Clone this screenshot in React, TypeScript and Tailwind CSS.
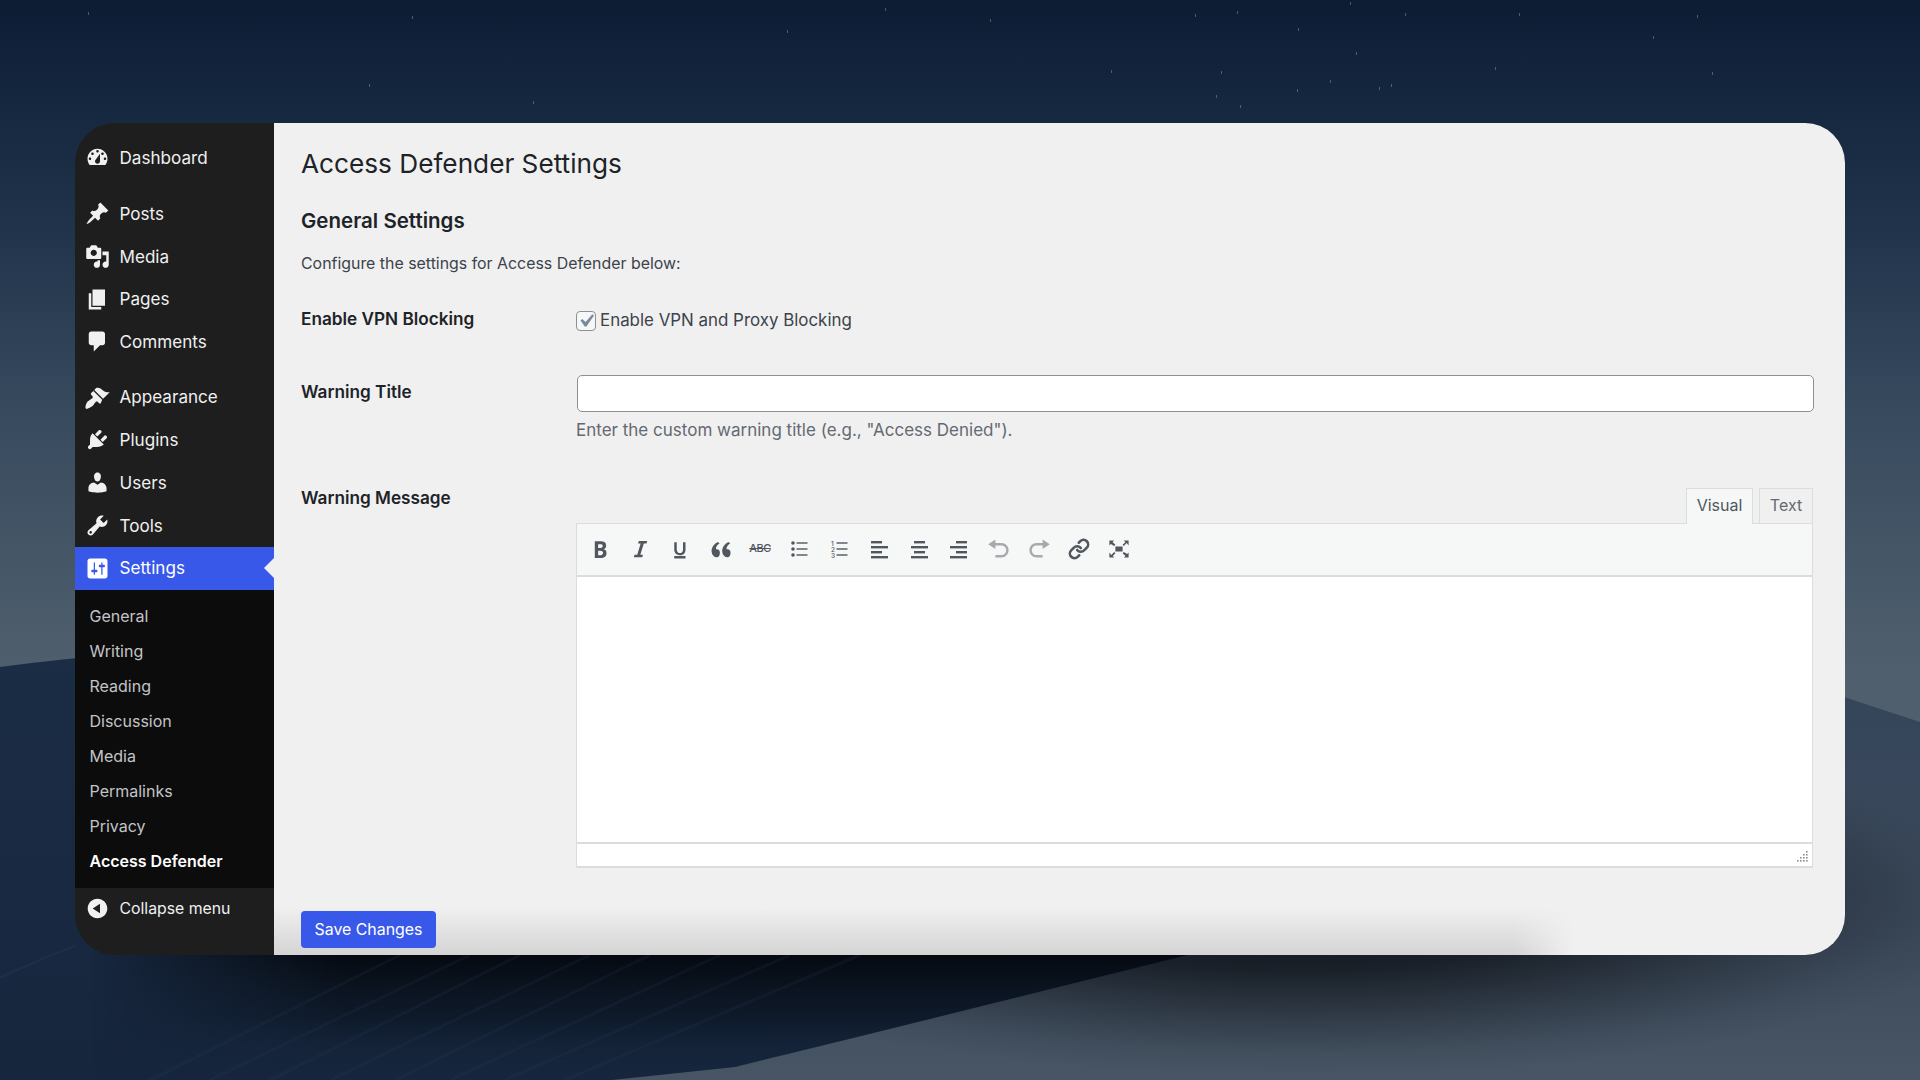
import React from "react";
import { Link } from "lucide-react";

const P = ({ d, size = 24, className = "", vb = "0 0 20 20" }: { d: string; size?: number; className?: string; vb?: string }) => (
  <svg width={size} height={size} viewBox={vb} className={className} fill="currentColor">
    <path d={d} fillRule="evenodd" />
  </svg>
);

const icons: Record<string, string> = {
  dashboard:
    "M3.76 16h12.48c1.1-1.37 1.76-3.11 1.76-5 0-4.42-3.58-8-8-8s-8 3.58-8 8c0 1.89.66 3.63 1.76 5zM10 4c.55 0 1 .45 1 1s-.45 1-1 1-1-.45-1-1 .45-1 1-1zM6 6c.55 0 1 .45 1 1s-.45 1-1 1-1-.45-1-1 .45-1 1-1zm8 0c.55 0 1 .45 1 1s-.45 1-1 1-1-.45-1-1 .45-1 1-1zm-5.37 5.55L12 7v6c0 1.1-.9 2-2 2s-2-.9-2-2c0-.57.24-1.08.63-1.45zM4 10c.55 0 1 .45 1 1s-.45 1-1 1-1-.45-1-1 .45-1 1-1zm12 0c.55 0 1 .45 1 1s-.45 1-1 1-1-.45-1-1 .45-1 1-1z",
  posts:
    "M10.44 3.02l1.82-1.82 6.36 6.35-1.83 1.82c-1.05-.68-2.48-.57-3.41.36l-.75.75c-.92.93-1.04 2.35-.35 3.41l-1.83 1.82-2.41-2.41-2.8 2.79c-.42.42-3.38 2.71-3.8 2.29s1.86-3.39 2.28-3.81l2.79-2.79L4.1 9.36l1.83-1.82c1.05.69 2.48.57 3.4-.36l.75-.75c.93-.92 1.05-2.35.36-3.41z",
  media:
    "M13 11V4c0-.55-.45-1-1-1h-1.67L9 1H5L3.67 3H2c-.55 0-1 .45-1 1v7c0 .55.45 1 1 1h10c.55 0 1-.45 1-1zM7 4.5c1.38 0 2.5 1.12 2.5 2.5S8.38 9.5 7 9.5 4.5 8.38 4.5 7 5.62 4.5 7 4.5zM14 6h5v10.5c0 1.38-1.12 2.5-2.5 2.5S14 17.88 14 16.5s1.12-2.5 2.5-2.5c.17 0 .34.02.5.05V9h-3V6zm-4 8.05V13h2v3.5c0 1.38-1.12 2.5-2.5 2.5S7 17.88 7 16.5 8.12 14 9.5 14c.17 0 .34.02.5.05z",
  pages: "M6 15V2h10v13H6zm-1 1h8v2H3V5h2v11z",
  comments: "M5 2h9c1.1 0 2 .9 2 2v7c0 1.1-.9 2-2 2h-2l-5 5v-5H5c-1.1 0-2-.9-2-2V4c0-1.1.9-2 2-2z",
  appearance:
    "M14.48 11.06L7.41 3.99l1.5-1.5c.5-.56 2.3-.47 3.51.32 1.21.8 1.43 1.28 2.91 2.1 1.18.64 2.45 1.26 4.45.85zm-.71.71L6.7 4.7 4.93 6.47c-.39.39-.39 1.02 0 1.41l1.06 1.06c.39.39.39 1.03 0 1.42-.6.6-1.43 1.11-2.21 1.69-.35.26-.7.53-1.01.84C1.43 13.23.39 16.8.39 17.92c0 .54.18.85.53 1.1.66.45 3.95-.99 5.28-2.33.32-.31.58-.66.84-1.01.58-.78 1.09-1.61 1.69-2.21.39-.39 1.03-.39 1.42 0l1.06 1.06c.39.39 1.02.39 1.41 0z",
  plugins:
    "M13.11 4.36L9.87 7.6 8 5.73l3.24-3.24c.35-.34 1.05-.2 1.56.32.52.51.66 1.21.31 1.55zm-8 1.77l.91-1.12 9.01 9.01-1.19.84c-.71.71-2.63 1.16-3.82 1.16H6.14L4.9 17.26c-.59.59-1.54.59-2.12 0-.59-.58-.59-1.53 0-2.12l1.24-1.24v-3.88c0-1.13.4-3.19 1.09-3.89zm7.26 3.97l3.24-3.24c.34-.35 1.04-.21 1.55.31.52.51.66 1.21.31 1.55l-3.24 3.25z",
  users:
    "M10 9.25c-2.27 0-2.73-3.44-2.73-3.44C7 4.02 7.82 2 9.97 2c2.16 0 2.98 2.02 2.71 3.81 0 0-.41 3.44-2.68 3.44zm0 2.57L12.72 10c2.39 0 4.52 2.33 4.52 4.53v2.49s-3.65 1.13-7.24 1.13c-3.65 0-7.24-1.13-7.24-1.13v-2.49c0-2.25 1.94-4.48 4.47-4.48z",
  tools:
    "M16.68 9.77c-1.34 1.34-3.3 1.67-4.95.99l-5.41 6.52c-.99.99-2.59.99-3.58 0s-.99-2.59 0-3.57l6.52-5.42c-.68-1.65-.35-3.61.99-4.95 1.28-1.28 3.12-1.62 4.72-1.06l-2.89 2.89 2.82 2.82 2.86-2.87c.53 1.58.18 3.39-1.08 4.65zM3.81 16.21c.4.39 1.04.39 1.43 0 .4-.4.4-1.04 0-1.43-.39-.4-1.03-.4-1.43 0-.39.39-.39 1.03 0 1.43z",
  settings:
    "M18 16V4c0-1.1-.9-2-2-2H4c-1.1 0-2 .9-2 2v12c0 1.1.9 2 2 2h12c1.1 0 2-.9 2-2zM8 11h1c.55 0 1 .45 1 1s-.45 1-1 1H8v1.5c0 .28-.22.5-.5.5s-.5-.22-.5-.5V13H6c-.55 0-1-.45-1-1s.45-1 1-1h1V5.5c0-.28.22-.5.5-.5s.5.22.5.5V11zm5-2h-1c-.55 0-1-.45-1-1s.45-1 1-1h1V5.5c0-.28.22-.5.5-.5s.5.22.5.5V7h1c.55 0 1 .45 1 1s-.45 1-1 1h-1v5.5c0 .28-.22.5-.5.5s-.5-.22-.5-.5V9z",
  collapse: "M10 2.16c4.33 0 7.84 3.51 7.84 7.84s-3.51 7.84-7.84 7.84S2.16 14.33 2.16 10 5.71 2.16 10 2.16zm2 11.72V6.12L6.18 9.97z",
};

const stars = [
  [88, 12], [412, 16], [885, 8], [1350, 2], [1237, 11], [1195, 14], [1405, 13], [1519, 13], [1697, 15], [990, 19],
  [787, 30], [1298, 28], [1653, 36], [1356, 52], [1495, 67], [1712, 72], [1330, 80], [1391, 84], [1297, 89], [1111, 70],
  [1221, 71], [369, 84], [1216, 95], [533, 101], [1379, 87], [1240, 105],
];

const streaks = [
  [150, 1080, 400, 955], [210, 1080, 470, 955], [270, 1080, 520, 955], [330, 1080, 590, 955], [395, 1080, 650, 955],
  [450, 1080, 720, 955], [505, 1080, 790, 955], [565, 1080, 860, 955],
];

const EDGE = "L857 1037 L735 1067 L612 1080";

const Background = () => (
  <svg className="absolute inset-0" width="1920" height="1080" viewBox="0 0 1920 1080">
    <defs>
      <linearGradient id="sky" x1="0" y1="0" x2="0" y2="1">
        <stop offset="0" stopColor="#0c1c33" />
        <stop offset="0.09" stopColor="#15263f" />
        <stop offset="0.2" stopColor="#20324a" />
        <stop offset="0.38" stopColor="#384a5e" />
        <stop offset="0.62" stopColor="#4f5f6d" />
      </linearGradient>
      <linearGradient id="duneR" gradientUnits="userSpaceOnUse" x1="0" y1="690" x2="0" y2="1080">
        <stop offset="0" stopColor="#35455a" />
        <stop offset="0.6" stopColor="#3c4a5b" />
        <stop offset="1" stopColor="#475564" />
      </linearGradient>
      <linearGradient id="duneL" gradientUnits="userSpaceOnUse" x1="0" y1="660" x2="0" y2="1080">
        <stop offset="0" stopColor="#1b2c45" />
        <stop offset="1" stopColor="#16263d" />
      </linearGradient>
      <linearGradient id="shadow" gradientUnits="userSpaceOnUse" x1="0" y1="955" x2="0" y2="1080">
        <stop offset="0" stopColor="#05090f" stopOpacity="0.97" />
        <stop offset="0.5" stopColor="#0b1522" stopOpacity="0.7" />
        <stop offset="1" stopColor="#16263d" stopOpacity="0" />
      </linearGradient>
      <linearGradient id="hfade" gradientUnits="userSpaceOnUse" x1="90" y1="0" x2="340" y2="0">
        <stop offset="0" stopColor="#000" />
        <stop offset="1" stopColor="#fff" />
      </linearGradient>
      <mask id="hmask">
        <rect width="1920" height="1080" fill="url(#hfade)" />
      </mask>
      <radialGradient id="cardShade">
        <stop offset="0" stopColor="#0a0d12" stopOpacity="0.9" />
        <stop offset="0.4" stopColor="#0a0d12" stopOpacity="0.7" />
        <stop offset="0.7" stopColor="#0a0d12" stopOpacity="0.28" />
        <stop offset="0.88" stopColor="#0a0d12" stopOpacity="0.07" />
        <stop offset="1" stopColor="#0a0d12" stopOpacity="0" />
      </radialGradient>
    </defs>
    <rect width="1920" height="1080" fill="url(#sky)" />
    {stars.map(([x, y], i) => (
      <rect key={i} x={x} y={y} width="1" height="3" fill="#aab4c2" opacity="0.4" />
    ))}
    <path d="M1000 680 C1300 625 1600 640 1844 697 L1920 722 L1920 1080 L600 1080 Z" fill="url(#duneR)" />
    <ellipse cx="1300" cy="900" rx="720" ry="175" fill="url(#cardShade)" />
    <path d={`M0 667 C300 630 600 620 1100 640 L1260 900 L1188 955 ${EDGE} L0 1080 Z`} fill="url(#duneL)" />
    <path d={`M60 950 L1210 950 L1188 955 ${EDGE} L60 1080 Z`} fill="url(#shadow)" mask="url(#hmask)" />
    <g opacity="0.15" stroke="#2f4158" strokeWidth="3">
      {streaks.map(([a, b, c, d], i) => (
        <line key={i} x1={a} y1={b} x2={c} y2={d} />
      ))}
    </g>
    <path d="M0 976 C25 965 55 952 75 945 L75 947 C55 954 25 968 0 979 Z" fill="#2f4056" opacity="0.3" />
  </svg>
);

const Item = ({ icon, label, active = false }: { icon: string; label: string; active?: boolean }) => (
  <div className={`relative flex items-center h-[42.75px] text-[17.1px] ${active ? "bg-[#3858e9] text-white" : "text-[#f0f0f1]"}`}>
    <span className="w-[44.5px] flex justify-center shrink-0">
      <P d={icons[icon]} size={25} className={active ? "text-white" : "text-[#f0f0f1]"} />
    </span>
    <span>{label}</span>
    {active && (
      <span className="absolute right-0 top-1/2 -translate-y-1/2 border-y-[10px] border-y-transparent border-r-[10px] border-r-[#f0f0f1]" />
    )}
  </div>
);

const Sub = ({ label, strong = false }: { label: string; strong?: boolean }) => (
  <div className={`h-[35px] flex items-center pl-[14.5px] text-[16px] ${strong ? "font-semibold text-white" : "text-[#c3c4c7]"}`}>{label}</div>
);

const Sidebar = () => (
  <aside className="w-[199px] shrink-0 bg-[#1e1e1e] flex flex-col pt-[13.5px]">
    <Item icon="dashboard" label="Dashboard" />
    <div className="h-[13.5px]" />
    <Item icon="posts" label="Posts" />
    <Item icon="media" label="Media" />
    <Item icon="pages" label="Pages" />
    <Item icon="comments" label="Comments" />
    <div className="h-[12.5px]" />
    <Item icon="appearance" label="Appearance" />
    <Item icon="plugins" label="Plugins" />
    <Item icon="users" label="Users" />
    <Item icon="tools" label="Tools" />
    <Item icon="settings" label="Settings" active />
    <div className="bg-[#0c0c0c] pt-[9px] pb-[9px] flex flex-col">
      {["General", "Writing", "Reading", "Discussion", "Media", "Permalinks", "Privacy"].map((s) => (
        <Sub key={s} label={s} />
      ))}
      <Sub label="Access Defender" strong />
    </div>
    <div className="flex items-center h-[42px] text-[15.8px] text-[#f0f0f1]">
      <span className="w-[44.5px] flex justify-center shrink-0">
        <P d={icons.collapse} size={25} />
      </span>
      <span>Collapse menu</span>
    </div>
  </aside>
);

const Lines = ({ rows }: { rows: [number, number][] }) => (
  <svg width="24" height="24" viewBox="0 0 24 24" fill="#50575e">
    {rows.map(([x, w], i) => (
      <rect key={i} x={x} y={4 + i * 5} width={w} height="2.4" />
    ))}
  </svg>
);

const Toolbar = () => {
  const c = "w-[39.9px] h-[40px] flex items-center justify-center shrink-0";
  return (
    <div className="flex items-center h-[53px] pl-[3.5px] pb-[2px] bg-[#f6f7f7] border-b-2 border-[#dcdcde]">
      <span className={c}>
        <P size={26} className="text-[#50575e]" d="M6 4v13h4.54c1.37 0 2.46-.33 3.26-1 .8-.66 1.2-1.58 1.2-2.77 0-.84-.17-1.51-.51-2.01s-.9-.85-1.67-1.03v-.09c.57-.1 1.02-.4 1.36-.9s.51-1.13.51-1.91c0-1.14-.39-1.98-1.17-2.5C12.75 4.26 11.5 4 9.78 4H6zm2.57 5.15V6.26h1.36c.73 0 1.27.11 1.61.32.34.22.51.58.51 1.07 0 .54-.16.92-.47 1.15s-.82.35-1.51.35h-1.5zm0 2.19h1.6c1.44 0 2.16.53 2.16 1.61 0 .6-.17 1.05-.51 1.34s-.86.43-1.57.43H8.57v-3.38z" />
      </span>
      <span className={c}>
        <P size={25} className="text-[#50575e]" d="M14.78 6h-2.13l-2.8 9h2.12l-.62 2H4.6l.62-2h2.14l2.8-9H8.03l.62-2h6.75z" />
      </span>
      <span className={c}>
        <P size={25} className="text-[#50575e]" d="M14 5h-2v5.71c0 1.99-1.12 2.98-2.45 2.98-1.32 0-2.55-1-2.55-2.96V5H5v5.87c0 1.91 1 4.54 4.48 4.54 3.49 0 4.52-2.58 4.52-4.5V5zm0 13v-2H5v2h9z" />
      </span>
      <span className={c}>
        <P size={25} className="text-[#50575e]" d="M9.49 13.22c0-.74-.2-1.38-.61-1.9-.62-.78-1.83-.88-2.53-.72-.29-1.65 1.11-3.75 2.92-4.65L7.88 4.75c-2.73 1.3-5.42 4.28-4.96 8.05C3.21 15.43 4.98 17 6.99 17c2.03 0 2.5-1.78 2.5-3.78zm8.5 0c0-.74-.2-1.38-.61-1.9-.62-.78-1.83-.88-2.53-.72-.29-1.65 1.11-3.75 2.92-4.65l-1.39-1.2c-2.73 1.3-5.42 4.28-4.96 8.05.29 2.63 2.06 4.2 4.07 4.2 2.03 0 2.5-1.78 2.5-3.78z" />
      </span>
      <span className={`${c} text-[11px] font-medium text-[#50575e] line-through tracking-[-0.5px]`}>ABC</span>
      <span className={c}>
        <svg width="24" height="24" viewBox="0 0 24 24" fill="#50575e">
          <circle cx="5" cy="6" r="1.8" /><circle cx="5" cy="12" r="1.8" /><circle cx="5" cy="18" r="1.8" />
          <rect x="8.5" y="5.3" width="11" height="1.4" /><rect x="8.5" y="11.3" width="11" height="1.4" /><rect x="8.5" y="17.3" width="11" height="1.4" />
        </svg>
      </span>
      <span className={c}>
        <svg width="24" height="24" viewBox="0 0 24 24" fill="#50575e">
          <text x="3" y="9" fontSize="6.5" fontFamily="Inter, sans-serif" fontWeight="500">1</text>
          <text x="3" y="15" fontSize="6.5" fontFamily="Inter, sans-serif" fontWeight="500">2</text>
          <text x="3" y="21" fontSize="6.5" fontFamily="Inter, sans-serif" fontWeight="500">3</text>
          <rect x="8.5" y="5.3" width="11" height="1.4" /><rect x="8.5" y="11.3" width="11" height="1.4" /><rect x="8.5" y="17.3" width="11" height="1.4" />
        </svg>
      </span>
      <span className={c}><Lines rows={[[3, 11], [3, 17], [3, 11], [3, 17]]} /></span>
      <span className={c}><Lines rows={[[6, 11], [3, 17], [6, 11], [3, 17]]} /></span>
      <span className={c}><Lines rows={[[9, 11], [3, 17], [9, 11], [3, 17]]} /></span>
      <span className={c}>
        <P size={24} className="text-[#a7aaad]" d="M12 5H7V2L1 6l6 4V7h5c2.2 0 4 1.8 4 4s-1.8 4-4 4H7v2h5c3.3 0 6-2.7 6-6s-2.7-6-6-6z" />
      </span>
      <span className={c}>
        <P size={24} className="text-[#a7aaad]" d="M8 5h5V2l6 4-6 4V7H8c-2.2 0-4 1.8-4 4s1.8 4 4 4h5v2H8c-3.3 0-6-2.7-6-6s2.7-6 6-6z" />
      </span>
      <span className={c}>
        <Link size={22} strokeWidth={2.8} className="text-[#50575e]" />
      </span>
      <span className={c}>
        <P size={24} className="text-[#50575e]" d="M7 8h6v4H7zM2 13v4h4l-1.2-1.2L7 13.5l-1-1-2.4 2.4zM14 17h4v-4l-1.2 1.2L14 12.5l-1 1 2.4 2.4zM14 3l1.3 1.3L13 6.5l1 1 2.4-2.4L18 7V3zM6 3H2v4l1.2-1.2L6 7.5l1-1-2.4-2.4z" />
      </span>
    </div>
  );
};

const Editor = () => (
  <div className="w-[1237px]">
    <div className="flex justify-end items-end h-[36px] gap-[6px]">
      <div className="w-[67px] h-[36px] pb-[4px] -mb-px relative bg-[#f6f7f7] border border-b-0 border-[#dcdcde] flex items-center justify-center text-[16px] text-[#50575e]">Visual</div>
      <div className="w-[54px] h-[35px] pb-[3px] bg-[#f0f0f1] border border-b-0 border-[#dcdcde] flex items-center justify-center text-[16px] text-[#646970]">Text</div>
    </div>
    <div className="border border-[#dcdcde] border-b-2 bg-white">
      <Toolbar />
      <div className="h-[265px] bg-white" />
      <div className="relative h-[24px] border-t-2 border-[#dcdcde] bg-white">
        <svg className="absolute right-[4px] bottom-[3px]" width="12" height="12" viewBox="0 0 12 12" fill="#8c8f94">
          {[[10, 0], [10, 3], [7, 3], [10, 6], [7, 6], [4, 6], [10, 9], [7, 9], [4, 9], [1, 9]].map(([x, y], i) => (
            <rect key={i} x={x} y={y} width="1.6" height="1.6" />
          ))}
        </svg>
      </div>
    </div>
  </div>
);

const Main = () => (
  <main className="relative flex-1 bg-[#f0f0f1] pl-[27px] pr-[30px] pt-[23.5px] overflow-hidden text-[#3c434a]">
    <h1 className="h-[36px] leading-[36px] text-[26.2px] text-[#1d2327] font-normal">Access Defender Settings</h1>
    <h2 className="mt-[25px] h-[28px] leading-[28px] text-[20.5px] font-semibold text-[#1d2327]">General Settings</h2>
    <p className="mt-[17px] h-[24px] leading-[24px] text-[15.9px]">Configure the settings for Access Defender below:</p>
    <div className="mt-[31px] flex h-[26px] items-center">
      <div className="w-[275px] shrink-0 pb-[2px] text-[17.2px] font-semibold text-[#1d2327]">Enable VPN Blocking</div>
      <div className="flex items-center gap-[4px] text-[16.9px] pt-[1px]">
        <span className="w-[20px] h-[20px] rounded-[4px] border border-[#8c8f94] bg-[#f6f7f7] flex items-center justify-center">
          <svg className="shrink-0" width="26" height="26" viewBox="0 0 20 20" fill="#7b8a9a"><path d="M14.83 4.89l1.34.94-5.81 8.38H9.02L5.78 9.67l1.34-1.25 2.57 2.4z" /></svg>
        </span>
        Enable VPN and Proxy Blocking
      </div>
    </div>
    <div className="mt-[42px] flex">
      <div className="w-[275px] shrink-0 text-[17.2px] leading-[34px] font-semibold text-[#1d2327]">Warning Title</div>
      <div className="flex-1">
        <input className="block w-[1237px] ml-px h-[37px] rounded-[5px] border border-[#8c8f94] bg-white" />
        <p className="mt-[6px] leading-[24px] text-[17px] text-[#646970]">Enter the custom warning title (e.g., "Access Denied").</p>
      </div>
    </div>
    <div className="mt-[45px] flex">
      <div className="w-[275px] shrink-0 pt-[1px] text-[17.2px] leading-[20px] font-semibold text-[#1d2327]">Warning Message</div>
      <Editor />
    </div>
    <button className="relative z-10 mt-[43px] block w-[135px] h-[37px] rounded-[4px] bg-[#3858e9] text-white text-[15.9px]">Save Changes</button>
    <div className="absolute left-0 bottom-0 w-[1300px] h-[48px] pointer-events-none bg-linear-to-b from-transparent to-[#d4d4d4]" />
    <div className="absolute left-[1240px] bottom-0 w-[60px] h-[48px] pointer-events-none bg-linear-to-r from-transparent to-[#f0f0f1]" />
  </main>
);

export default function App() {
  return (
    <div className="relative w-[1920px] h-[1080px] overflow-hidden font-['Inter',sans-serif]">
      <Background />
      <div className="relative ml-[75px] pt-[122.5px]">
        <div className="flex w-[1770px] h-[832.5px] rounded-[40px] overflow-hidden">
          <Sidebar />
          <Main />
        </div>
      </div>
    </div>
  );
}
